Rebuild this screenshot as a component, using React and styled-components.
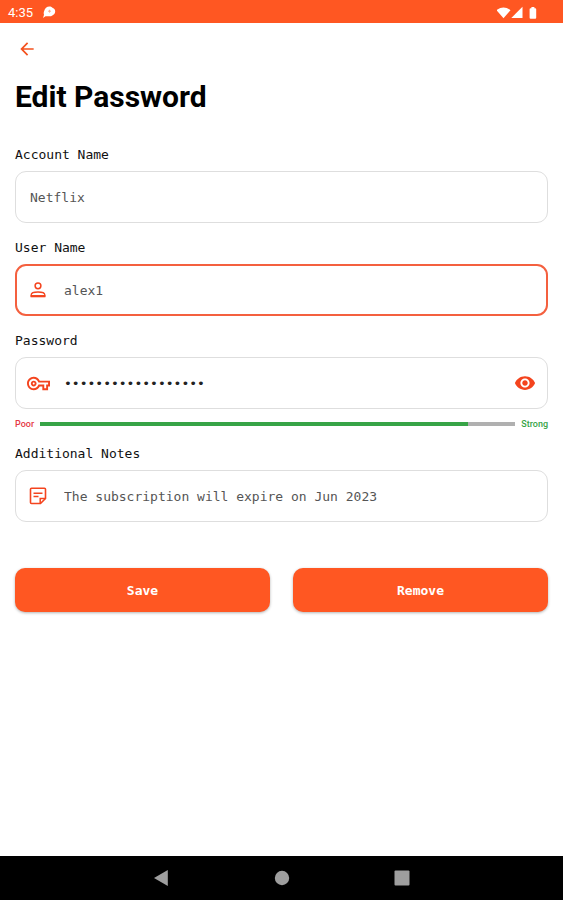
import React, { useState } from 'react';
import styled, { createGlobalStyle } from 'styled-components';
import { MdArrowBack, MdOutlineVpnKey, MdVisibility } from 'react-icons/md';

function StatusIcons() {
  return (
    <svg width="42" height="14" viewBox="0 0 42 14" fill="currentColor" aria-hidden="true">
      <path d="M-0.500 4.200Q6.500 -1.400 13.500 4.200L6.500 12.200Z" />
      <path d="M25.500 0.800V12H14.300Z" />
      <path d="M32.600 3.200q0-1 1-1h.8V1h3v1.200h.8q1 0 1 1v8.600q0 1-1 1h-4.600q-1 0-1-1Z" />
    </svg>
  );
}

function BubbleIcon() {
  return (
    <svg width="14" height="14" viewBox="0 0 14 14" aria-hidden="true">
      <path
        d="M7.500 .5c1.500 0 2.600.6 3.300 1.500 1.500.6 2.400 1.900 2.400 3.500 0 2-1.300 3.300-2.900 3.900-1 .9-2.500 1.100-4 .8L3.500 10.300 1 12l1-3.200C1.500 7.500 1.700 6 2.200 5 2.700 2.300 4.800.5 7.500.5Z"
        fill="#fff"
      />
      <path d="M6 5.200h3M7.500 3.800v2.800" stroke="#ffab8f" strokeWidth="1" />
    </svg>
  );
}

function PersonIcon() {
  return (
    <svg width="18" height="18" viewBox="0 0 18 18" fill="none" stroke="currentColor" aria-hidden="true">
      <circle cx="9" cy="4.800" r="2.900" strokeWidth="1.500" />
      <path d="M2.200 15v-1.200c0-1.800 3.200-2.800 6.800-2.800s6.800 1 6.800 2.800V15Z" strokeWidth="1.300" />
      <path d="M1.600 15.200h14.800" strokeWidth="2.200" />
    </svg>
  );
}

function NoteIcon() {
  return (
    <svg width="18" height="18" viewBox="0 0 18 18" fill="none" stroke="currentColor" aria-hidden="true">
      <path d="M2.500 1.200h13q1 0 1 1v9.300l-5 5h-9q-1 0-1-1V2.200q0-1 1-1Z" strokeWidth="1.600" />
      <path d="M4.500 6.200h9M4.500 9.400h5" strokeWidth="1.500" />
      <path d="M11.200 16.500v-5h5.300" strokeWidth="1.500" />
    </svg>
  );
}

function App() {
  const [accountName, setAccountName] = useState('Netflix');
  const [userName, setUserName] = useState('alex1');
  const [password, setPassword] = useState('netflix-alex1-2023');
  const [notes, setNotes] = useState('The subscription will expire on Jun 2023');
  const [isVisible, setIsVisible] = useState(false);

  const strength = Math.min(password.length * 5, 100);

  return (
    <Screen>
      <GlobalStyle />
      <StatusBar>
        <span>4:35</span>
        <BubbleIcon />
        <StatusRight>
          <StatusIcons />
        </StatusRight>
      </StatusBar>
      <Main>
        <BackButton type="button" aria-label="Back">
          <MdArrowBack />
        </BackButton>
        <Title>Edit Password</Title>
        <Form onSubmit={(e) => e.preventDefault()}>
          <Field>
            <Label htmlFor="account">Account Name</Label>
            <InputBox>
              <Input id="account" value={accountName} onChange={(e) => setAccountName(e.target.value)} />
            </InputBox>
          </Field>
          <Field>
            <Label htmlFor="user">User Name</Label>
            <InputBox $active>
              <FieldIcon>
                <PersonIcon />
              </FieldIcon>
              <Input id="user" value={userName} onChange={(e) => setUserName(e.target.value)} />
            </InputBox>
          </Field>
          <Field>
            <Label htmlFor="password">Password</Label>
            <InputBox>
              <FieldIcon>
                <MdOutlineVpnKey size={23} />
              </FieldIcon>
              <Input
                id="password"
                type={isVisible ? 'text' : 'password'}
                value={password}
                onChange={(e) => setPassword(e.target.value)}
              />
              <EyeButton type="button" aria-label="Show password" onClick={() => setIsVisible(!isVisible)}>
                <MdVisibility />
              </EyeButton>
            </InputBox>
            <Strength>
              <StrengthText $color="#e53945">Poor</StrengthText>
              <Track>
                <TrackFill style={{ width: `${strength}%` }} />
              </Track>
              <StrengthText $color="#37a447">Strong</StrengthText>
            </Strength>
          </Field>
          <Field>
            <Label htmlFor="notes">Additional Notes</Label>
            <InputBox>
              <FieldIcon>
                <NoteIcon />
              </FieldIcon>
              <Input id="notes" value={notes} onChange={(e) => setNotes(e.target.value)} />
            </InputBox>
          </Field>
          <Actions>
            <ActionButton type="submit">Save</ActionButton>
            <ActionButton type="button">Remove</ActionButton>
          </Actions>
        </Form>
      </Main>
      <NavBar>
        <NavButton type="button" aria-label="Navigate back">
          <svg width="16" height="16" viewBox="0 0 16 16" fill="currentColor">
            <path d="M13.800 0v16L0 8Z" />
          </svg>
        </NavButton>
        <NavButton type="button" aria-label="Home">
          <svg width="16" height="16" viewBox="0 0 16 16" fill="currentColor">
            <circle cx="8" cy="8" r="7.200" />
          </svg>
        </NavButton>
        <NavButton type="button" aria-label="Recent apps">
          <svg width="16" height="16" viewBox="0 0 16 16" fill="currentColor">
            <rect x="0.500" y="0.500" width="15" height="15" rx="1" />
          </svg>
        </NavButton>
      </NavBar>
    </Screen>
  );
}

const GlobalStyle = createGlobalStyle`
  * {
    box-sizing: border-box;
  }
  body {
    margin: 0;
    background: #fff;
    font-family: Roboto, sans-serif;
  }
`;

const Screen = styled.div`
  display: flex;
  flex-direction: column;
  min-height: 100vh;
`;

const StatusBar = styled.header`
  display: flex;
  align-items: center;
  gap: 9px;
  height: 23px;
  padding: 2px 24px 0 8px;
  background: #ff5722;
  color: #fff;
  font-size: 13px;
`;

const StatusRight = styled.div`
  display: flex;
  margin-left: auto;
`;

const Main = styled.main`
  flex: 1;
  padding: 14px 15px;
`;

const IconButton = styled.button`
  display: flex;
  align-items: center;
  justify-content: center;
  padding: 0;
  border: 0;
  background: none;
  cursor: pointer;
`;

const BackButton = styled(IconButton)`
  width: 24px;
  height: 24px;
  color: #f4511e;
  font-size: 20px;
`;

const Title = styled.h1`
  margin: 18px 0 30px;
  font-size: 30px;
  line-height: 36px;
  font-weight: 700;
  color: #000;
`;

const Form = styled.form`
  display: flex;
  flex-direction: column;
  gap: 15px;
`;

const Field = styled.div`
  display: flex;
  flex-direction: column;
`;

const Label = styled.label`
  margin-bottom: 6px;
  font-family: 'DejaVu Sans Mono', monospace;
  font-size: 13px;
  line-height: 20px;
  color: #111;
`;

const InputBox = styled.div`
  display: flex;
  align-items: center;
  height: 52px;
  padding: 0 10px 0 ${({ $active }) => ($active ? 9 : 10)}px;
  border: ${({ $active }) => ($active ? '2px solid #f4603f' : '1px solid #dedede')};
  border-radius: 11px;
`;

const FieldIcon = styled.span`
  display: flex;
  align-items: center;
  justify-content: center;
  width: 24px;
  margin-right: 10px;
  color: #f4441e;
`;

const Input = styled.input`
  flex: 1;
  min-width: 0;
  border: 0;
  outline: 0;
  padding: 1px 4px 0;
  background: none;
  font-family: 'DejaVu Sans Mono', monospace;
  font-size: 13px;
  line-height: 20px;
  color: #555;

  &[type='password'] {
    color: #222;
  }
`;

const EyeButton = styled(IconButton)`
  width: 24px;
  color: #f4441e;
  font-size: 22px;
`;

const Strength = styled.div`
  display: flex;
  align-items: center;
  gap: 6px;
  height: 20px;
  padding-top: 9px;
`;

const StrengthText = styled.span`
  font-size: 9px;
  line-height: 12px;
  font-weight: 500;
  color: ${({ $color }) => $color};
`;

const Track = styled.div`
  flex: 1;
  height: 4px;
  background: #b0b0b0;
`;

const TrackFill = styled.div`
  height: 100%;
  background: #37a447;
`;

const Actions = styled.div`
  display: grid;
  grid-template-columns: 1fr 1fr;
  gap: 23px;
  margin-top: 31px;
`;

const ActionButton = styled.button`
  height: 44px;
  border: 0;
  border-radius: 10px;
  background: #ff5722;
  box-shadow: 0 1px 3px rgba(0, 0, 0, 0.3);
  color: #fff;
  font-family: 'DejaVu Sans Mono', monospace;
  font-size: 13px;
  font-weight: 700;
  cursor: pointer;
`;

const NavBar = styled.nav`
  display: flex;
  align-items: center;
  justify-content: center;
  gap: 104px;
  height: 44px;
  background: #000;
`;

const NavButton = styled(IconButton)`
  color: #9e9e9e;
`;

export default App;
